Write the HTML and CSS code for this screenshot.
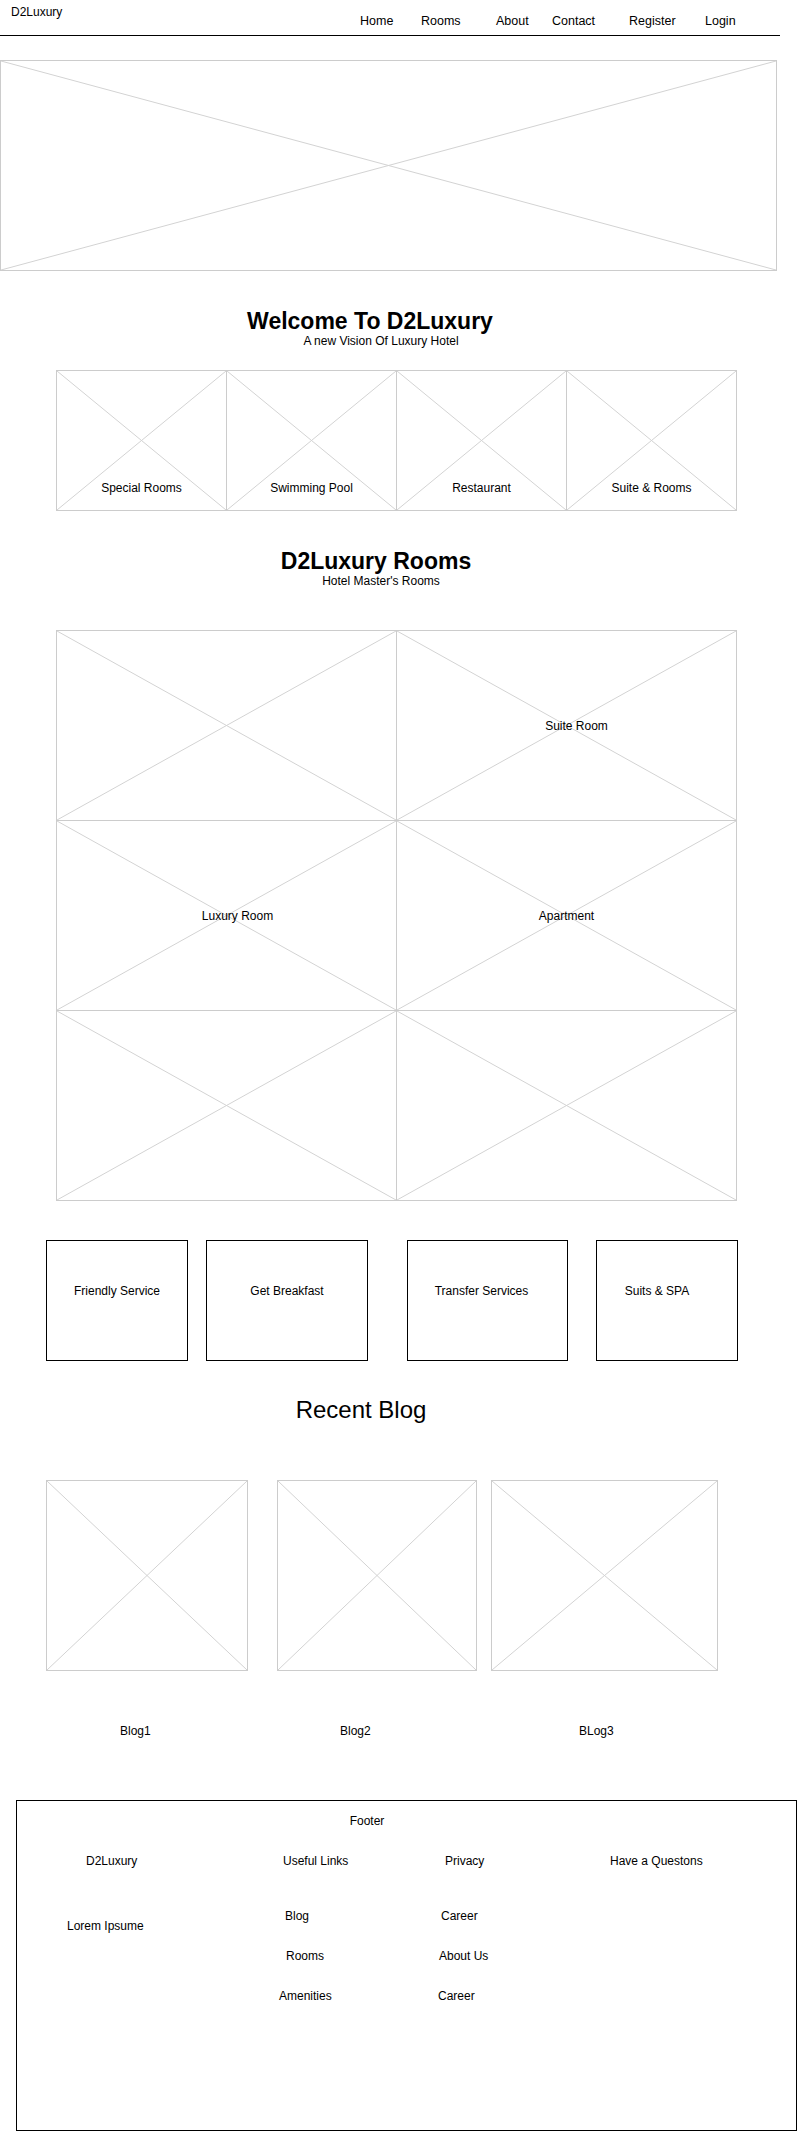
FILE: index.html
```html
<!DOCTYPE html>
<html lang="en">
<head>
    <meta charset="UTF-8">
    <meta name="viewport" content="width=device-width, initial-scale=1.0">
    <title>D2Luxury</title>
    <link rel="stylesheet" href="styles.css">
</head>
<body>
    <header class="topbar">
        <div class="logo">D2Luxury</div>
        <nav class="menu">
            <a href="#">Home</a>
            <a href="#">Rooms</a>
            <a href="#">About</a>
            <a href="#">Contact</a>
            <a href="#">Register</a>
            <a href="#">Login</a>
        </nav>
    </header>

    <div class="hero ph">
        <svg class="x" preserveAspectRatio="none"><line x1="0" y1="0" x2="100%" y2="100%"/><line x1="100%" y1="0" x2="0" y2="100%"/></svg>
    </div>

    <div class="intro intro-welcome">
        <h1>Welcome To D2Luxury</h1>
        <p>A new Vision Of Luxury Hotel</p>
    </div>

    <div class="features">
        <div class="feature">
            <svg class="x" preserveAspectRatio="none"><line x1="0" y1="0" x2="100%" y2="100%"/><line x1="100%" y1="0" x2="0" y2="100%"/></svg>
            <span>Special Rooms</span>
        </div>
        <div class="feature">
            <svg class="x" preserveAspectRatio="none"><line x1="0" y1="0" x2="100%" y2="100%"/><line x1="100%" y1="0" x2="0" y2="100%"/></svg>
            <span>Swimming Pool</span>
        </div>
        <div class="feature">
            <svg class="x" preserveAspectRatio="none"><line x1="0" y1="0" x2="100%" y2="100%"/><line x1="100%" y1="0" x2="0" y2="100%"/></svg>
            <span>Restaurant</span>
        </div>
        <div class="feature">
            <svg class="x" preserveAspectRatio="none"><line x1="0" y1="0" x2="100%" y2="100%"/><line x1="100%" y1="0" x2="0" y2="100%"/></svg>
            <span>Suite &amp; Rooms</span>
        </div>
    </div>

    <div class="intro intro-rooms">
        <h1>D2Luxury Rooms</h1>
        <p>Hotel Master's Rooms</p>
    </div>

    <div class="rooms">
        <div class="room">
            <svg class="x" preserveAspectRatio="none"><line x1="0" y1="0" x2="100%" y2="100%"/><line x1="100%" y1="0" x2="0" y2="100%"/></svg>
        </div>
        <div class="room room-suite">
            <svg class="x" preserveAspectRatio="none"><line x1="0" y1="0" x2="100%" y2="100%"/><line x1="100%" y1="0" x2="0" y2="100%"/></svg>
            <span>Suite Room</span>
        </div>
        <div class="room room-luxury">
            <svg class="x" preserveAspectRatio="none"><line x1="0" y1="0" x2="100%" y2="100%"/><line x1="100%" y1="0" x2="0" y2="100%"/></svg>
            <span>Luxury Room</span>
        </div>
        <div class="room">
            <svg class="x" preserveAspectRatio="none"><line x1="0" y1="0" x2="100%" y2="100%"/><line x1="100%" y1="0" x2="0" y2="100%"/></svg>
            <span>Apartment</span>
        </div>
        <div class="room">
            <svg class="x" preserveAspectRatio="none"><line x1="0" y1="0" x2="100%" y2="100%"/><line x1="100%" y1="0" x2="0" y2="100%"/></svg>
        </div>
        <div class="room">
            <svg class="x" preserveAspectRatio="none"><line x1="0" y1="0" x2="100%" y2="100%"/><line x1="100%" y1="0" x2="0" y2="100%"/></svg>
        </div>
    </div>

    <div class="services">
        <div class="service svc-1">Friendly Service</div>
        <div class="service svc-2">Get Breakfast</div>
        <div class="service svc-3">Transfer Services</div>
        <div class="service svc-4">Suits &amp; SPA</div>
    </div>

    <h2 class="blog-title">Recent Blog</h2>

    <div class="blogs">
        <div class="blog ph blog-1">
            <svg class="x" preserveAspectRatio="none"><line x1="0" y1="0" x2="100%" y2="100%"/><line x1="100%" y1="0" x2="0" y2="100%"/></svg>
        </div>
        <div class="blog ph blog-2">
            <svg class="x" preserveAspectRatio="none"><line x1="0" y1="0" x2="100%" y2="100%"/><line x1="100%" y1="0" x2="0" y2="100%"/></svg>
        </div>
        <div class="blog ph blog-3">
            <svg class="x" preserveAspectRatio="none"><line x1="0" y1="0" x2="100%" y2="100%"/><line x1="100%" y1="0" x2="0" y2="100%"/></svg>
        </div>
    </div>
    <div class="blog-names">
        <span>Blog1</span>
        <span>Blog2</span>
        <span>BLog3</span>
    </div>

    <footer class="footer">
        <div class="footer-title">Footer</div>
        <div class="footer-cols">
            <div class="fcol">
                <span class="ml-19">D2Luxury</span>
                <span class="lorem">Lorem Ipsume</span>
            </div>
            <div class="fcol">
                <span class="ml-4">Useful Links</span>
                <div class="flinks">
                    <a href="#" class="ml-6">Blog</a>
                    <a href="#" class="ml-7">Rooms</a>
                    <a href="#">Amenities</a>
                </div>
            </div>
            <div class="fcol">
                <span class="ml-7">Privacy</span>
                <div class="flinks">
                    <a href="#" class="ml-3">Career</a>
                    <a href="#" class="ml-1">About Us</a>
                    <a href="#">Career</a>
                </div>
            </div>
            <div class="fcol">
                <span>Have a Questons</span>
            </div>
        </div>
    </footer>
</body>
</html>
```

FILE: styles.css
```css
body {
    font-family: "Liberation Sans", Arial, sans-serif;
    font-size: 12px;
    line-height: 14px;
    color: #000;
    margin: 0;
    padding: 0;
}
a {
    color: #000;
    text-decoration: none;
}

/* header */
.topbar {
    display: flex;
    width: 780px;
    height: 35px;
    border-bottom: 1px solid #000;
}
.logo {
    width: 349px;
    padding: 5px 0 0 11px;
}
.menu {
    display: grid;
    grid-template-columns: 61px 75px 56px 77px 76px auto;
    padding-top: 14px;
    font-size: 12.5px;
}

/* placeholders */
.ph {
    position: relative;
    box-sizing: border-box;
    border: 1px solid #ccc;
}
.x {
    position: absolute;
    top: 0;
    left: 0;
    width: 100%;
    height: 100%;
}
.x line {
    stroke: #d3d3d3;
    stroke-width: 1;
}
.hero {
    margin-top: 24px;
    width: 777px;
    height: 211px;
}

/* headings */
.intro h1 {
    margin: 0;
    font-size: 23px;
    line-height: 26px;
    font-weight: bold;
    text-align: center;
}
.intro p {
    margin: 0;
    text-align: center;
    padding-right: 35px;
}
.intro-welcome {
    margin-top: 37px;
}
.intro-welcome h1 {
    padding-right: 57px;
}
.intro-rooms {
    margin-top: 37px;
}
.intro-rooms h1 {
    padding-right: 45px;
}

/* feature strip */
.features {
    display: grid;
    grid-template-columns: repeat(4, 1fr);
    gap: 1px;
    padding: 1px;
    background: #ccc;
    box-sizing: border-box;
    width: 681px;
    height: 141px;
    margin: 22px 0 0 56px;
}
.feature {
    position: relative;
    background: #fff;
    display: flex;
    flex-direction: column;
    justify-content: flex-end;
    align-items: center;
    padding-bottom: 15px;
}
.feature span,
.room span {
    position: relative;
}

/* rooms grid */
.rooms {
    display: grid;
    grid-template-columns: repeat(2, 1fr);
    grid-template-rows: repeat(3, 1fr);
    gap: 1px;
    padding: 1px;
    background: #ccc;
    box-sizing: border-box;
    width: 681px;
    height: 571px;
    margin: 42px 0 0 56px;
}
.room {
    position: relative;
    background: #fff;
    display: flex;
    align-items: center;
    justify-content: center;
}
.room-suite {
    padding-left: 20px;
}
.room-luxury {
    padding-left: 22px;
}

/* services */
.services {
    display: flex;
    margin: 39px 0 0 46px;
}
.service {
    box-sizing: border-box;
    height: 121px;
    border: 1px solid #000;
    padding-top: 43px;
    text-align: center;
}
.svc-1 {
    width: 142px;
}
.svc-2 {
    width: 162px;
    margin-left: 18px;
}
.svc-3 {
    width: 161px;
    margin-left: 39px;
    padding-right: 12px;
}
.svc-4 {
    width: 142px;
    margin-left: 28px;
    padding-right: 20px;
}

/* blog */
.blog-title {
    margin: 35px 0 0;
    font-size: 24px;
    line-height: 28px;
    font-weight: normal;
    text-align: center;
    padding-right: 75px;
}
.blogs {
    display: flex;
    margin: 56px 0 0 46px;
}
.blog {
    height: 191px;
}
.blog-1 {
    width: 202px;
}
.blog-2 {
    width: 200px;
    margin-left: 29px;
}
.blog-3 {
    width: 227px;
    margin-left: 14px;
}
.blog-names {
    display: grid;
    grid-template-columns: 220px 239px auto;
    margin-top: 53px;
    padding-left: 120px;
}

/* footer */
.footer {
    box-sizing: border-box;
    width: 781px;
    height: 331px;
    margin: 62px 0 0 16px;
    border: 1px solid #000;
    padding-top: 13px;
}
.footer-title {
    text-align: center;
    padding-right: 79px;
}
.footer-cols {
    display: grid;
    grid-template-columns: 212px 159px 172px auto;
    margin-top: 26px;
    padding-left: 50px;
}
.fcol {
    display: flex;
    flex-direction: column;
    align-items: flex-start;
}
.lorem {
    margin-top: 51px;
}
.flinks {
    display: flex;
    flex-direction: column;
    align-items: flex-start;
    gap: 26px;
    margin-top: 41px;
}
.ml-1 { margin-left: 1px; }
.ml-3 { margin-left: 3px; }
.ml-4 { margin-left: 4px; }
.ml-6 { margin-left: 6px; }
.ml-7 { margin-left: 7px; }
.ml-19 { margin-left: 19px; }
```
